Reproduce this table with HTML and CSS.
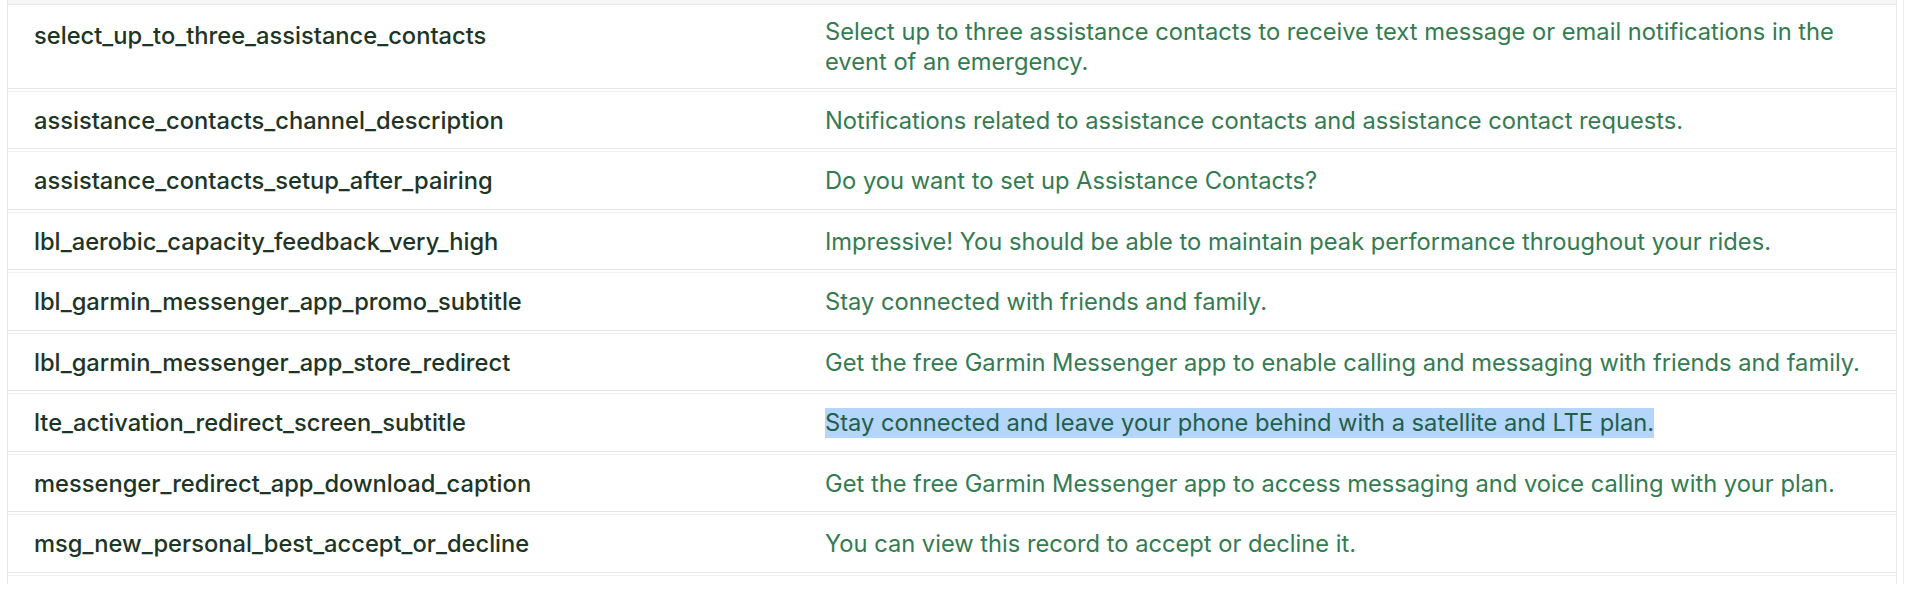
FILE: index.html
```html
<!DOCTYPE html>
<html lang="en">
<head>
<meta charset="utf-8">
<title>Strings</title>
<link rel="stylesheet" href="styles.css">
</head>
<body>
<div class="frame">
  <div class="sheet">
    <div class="header-edge"></div>
    <div class="row row-first">
      <div class="key">select_up_to_three_assistance_contacts</div>
      <div class="val">Select up to three assistance contacts to receive text message or email notifications in the event of an emergency.</div>
    </div>
    <div class="row">
      <div class="key">assistance_contacts_channel_description</div>
      <div class="val">Notifications related to assistance contacts and assistance contact requests.</div>
    </div>
    <div class="row">
      <div class="key">assistance_contacts_setup_after_pairing</div>
      <div class="val">Do you want to set up Assistance Contacts?</div>
    </div>
    <div class="row">
      <div class="key">lbl_aerobic_capacity_feedback_very_high</div>
      <div class="val">Impressive! You should be able to maintain peak performance throughout your rides.</div>
    </div>
    <div class="row">
      <div class="key">lbl_garmin_messenger_app_promo_subtitle</div>
      <div class="val">Stay connected with friends and family.</div>
    </div>
    <div class="row">
      <div class="key">lbl_garmin_messenger_app_store_redirect</div>
      <div class="val">Get the free Garmin Messenger app to enable calling and messaging with friends and family.</div>
    </div>
    <div class="row">
      <div class="key">lte_activation_redirect_screen_subtitle</div>
      <div class="val"><span class="selected">Stay connected and leave your phone behind with a satellite and LTE plan.</span></div>
    </div>
    <div class="row">
      <div class="key">messenger_redirect_app_download_caption</div>
      <div class="val">Get the free Garmin Messenger app to access messaging and voice calling with your plan.</div>
    </div>
    <div class="row">
      <div class="key">msg_new_personal_best_accept_or_decline</div>
      <div class="val">You can view this record to accept or decline it.</div>
    </div>
    <div class="row row-tail"></div>
  </div>
</div>
</body>
</html>
```

FILE: styles.css
```css
html, body {
  margin: 0;
  padding: 0;
  background: #ffffff;
}

body {
  font-family: Inter, "Noto Sans", "Liberation Sans", sans-serif;
  font-size: 23.7px;
  line-height: 30px;
  height: 598px;
  overflow: hidden;
}

.frame {
  width: 1904px;
  height: 584px;
  border-right: 1px solid #eeeeee;
  padding-left: 7px;
  box-sizing: border-box;
}

.sheet {
  width: 1890px;
  height: 584px;
  border-left: 1px solid #e6e6e6;
  border-right: 1px solid #e9e9e9;
  box-sizing: border-box;
  display: flex;
  flex-direction: column;
  gap: 2px;
  overflow: hidden;
}

.header-edge {
  height: 4px;
  flex: none;
  background: #f6f6f6;
  border-bottom: 1px solid #e8e8e8;
  margin-left: -8px;
}

.row {
  flex: none;
  display: grid;
  grid-template-columns: 791px 1fr;
  align-items: start;
  padding: 14px 0 12.5px;
  border-top: 1px solid #efefef;
  border-bottom: 1px solid #e4e4e4;
}

.row-first {
  border-top: none;
  padding: 10px 0 10.5px;
}

.row-first .key {
  padding-top: 4px;
}

.row-tail {
  height: 20px;
  padding: 0;
  border-bottom: none;
}

.key {
  padding: 0 20px 0 26px;
  color: #1d3527;
  font-weight: 500;
}

.val {
  padding: 0 8px 0 26px;
  color: #347b52;
}

.selected {
  display: inline-block;
  background: #b5d6fb;
  color: #1f5f4c;
}
```
